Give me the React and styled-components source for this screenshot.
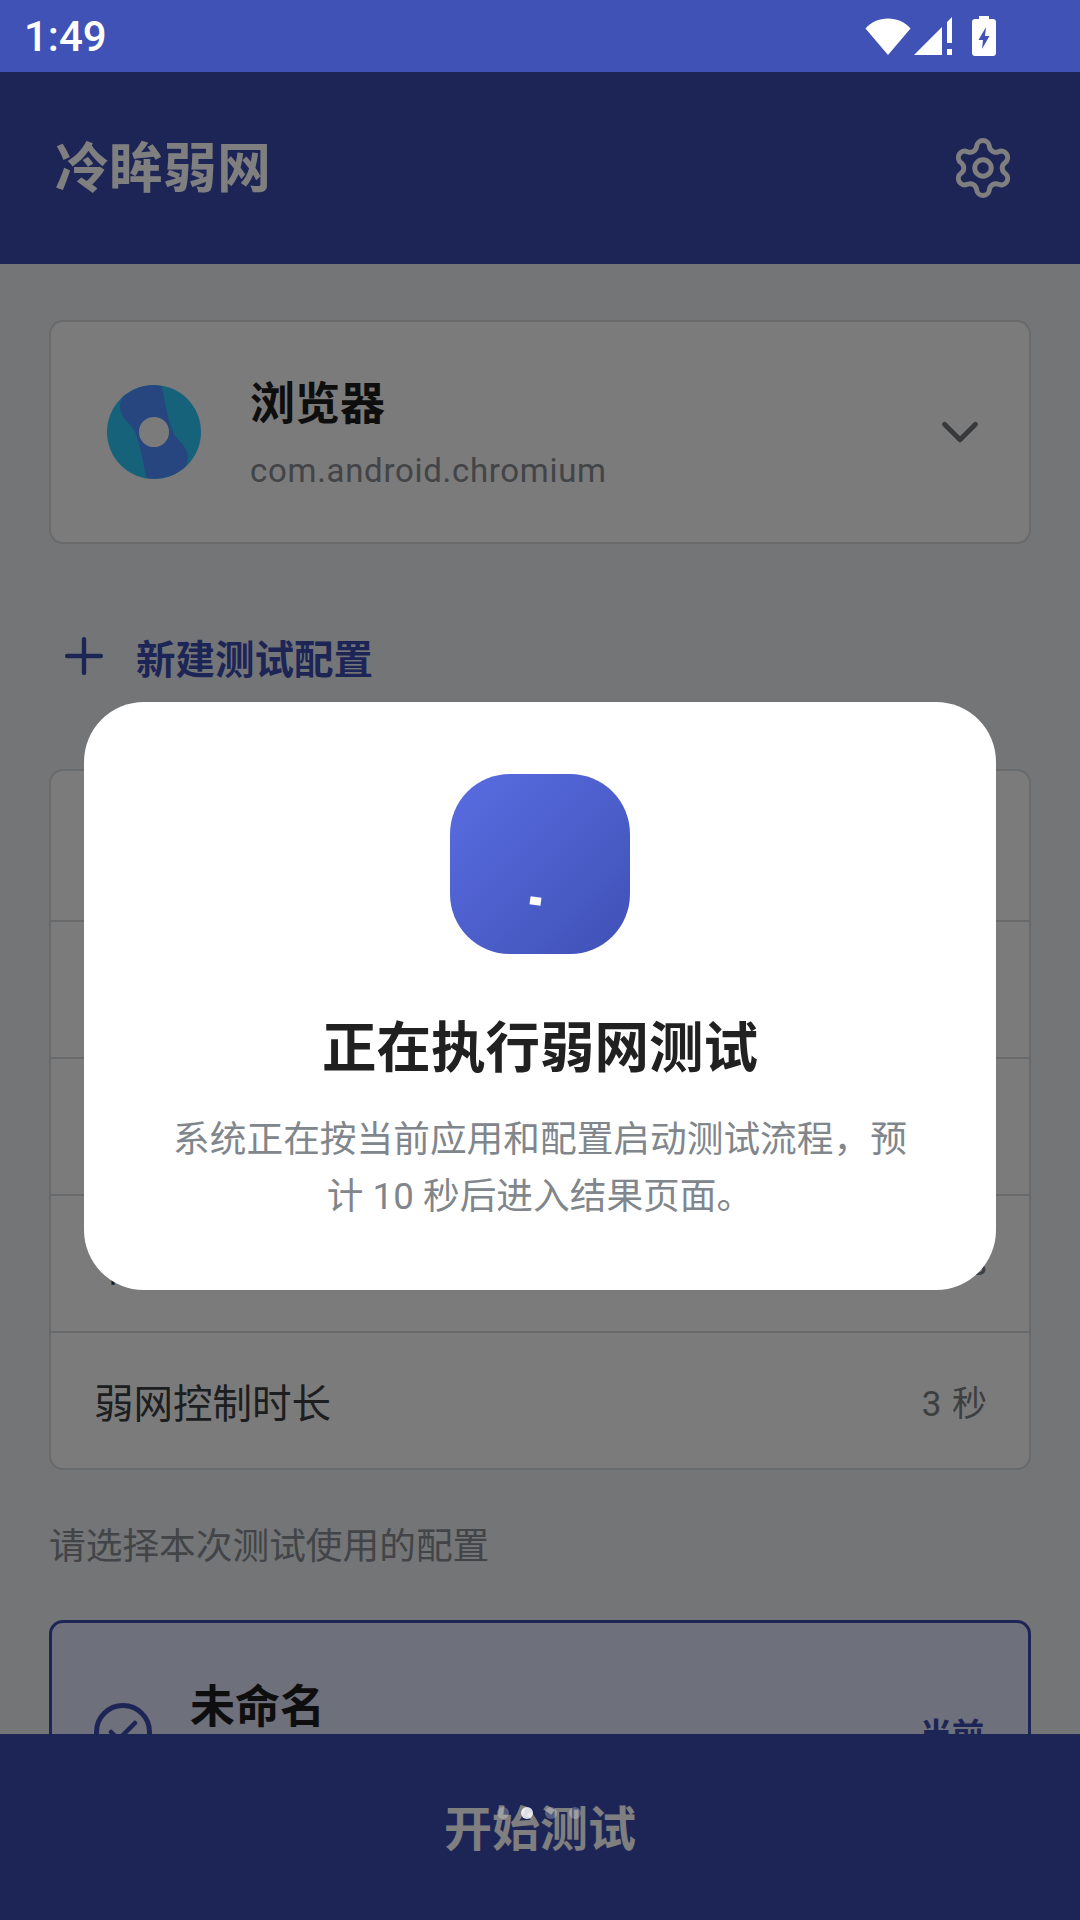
import React from "react";
import styled, { createGlobalStyle } from "styled-components";
import { Settings, ChevronDown, Plus, Check } from "lucide-react";

const GlobalStyle = createGlobalStyle`
  html, body {
    margin: 0;
    padding: 0;
  }
  body {
    font-family: Roboto, "Noto Sans CJK SC", sans-serif;
  }
  * {
    box-sizing: border-box;
  }
`;

const Phone = styled.div`
  position: relative;
  width: 1080px;
  height: 1920px;
  display: flex;
  flex-direction: column;
  overflow: hidden;
  background-color: #e7ebee;
`;

const StatusBar = styled.div`
  height: 72px;
  flex-shrink: 0;
  display: flex;
  align-items: center;
  justify-content: space-between;
  padding: 0 84px 0 24px;
  background-color: #4052b5;
  color: #ffffff;
  position: relative;
  z-index: 2;
`;

const Clock = styled.span`
  font-size: 42px;
  font-weight: 500;
`;

const StatusIcons = styled.div`
  display: flex;
  align-items: center;
`;

const AppBar = styled.div`
  height: 192px;
  flex-shrink: 0;
  display: flex;
  align-items: center;
  justify-content: space-between;
  padding: 0 64px 0 55px;
  background-color: #3a4aae;
  color: #ffffff;
`;

const AppTitle = styled.h1`
  margin: -7px 0 0;
  font-size: 54px;
  font-weight: 700;
`;

const Content = styled.div`
  flex: 1;
  min-height: 0;
  overflow: hidden;
  padding: 56px 49px 0;
`;

const Card = styled.div`
  border: 2px solid #d0d4d7;
  border-radius: 14px;
  background-color: #f6f6f6;
`;

const AppCard = styled(Card)`
  height: 224px;
  display: flex;
  align-items: center;
  padding: 0 38px 0 56px;
`;

const AppLogo = styled.svg`
  width: 94px;
  height: 94px;
  flex-shrink: 0;
`;

const AppText = styled.div`
  flex: 1;
  margin-left: 49px;
  padding-top: 4px;
  display: flex;
  flex-direction: column;
`;

const AppName = styled.span`
  font-size: 45px;
  line-height: 60px;
  font-weight: 700;
  color: #1c1c1e;
`;

const PackageName = styled.span`
  margin-top: 14px;
  font-size: 33px;
  line-height: 44px;
  letter-spacing: 0.7px;
  color: #85898e;
`;

const AddRow = styled.div`
  height: 72px;
  margin-top: 76px;
  display: flex;
  align-items: center;
  gap: 23px;
  padding-left: 6px;
  color: #3a4aae;
`;

const AddLabel = styled.span`
  font-size: 39.5px;
  font-weight: 700;
`;

const ParamList = styled(Card)`
  margin-top: 77px;
  height: 701px;
  display: flex;
  flex-direction: column;
`;

const ParamRow = styled.div`
  flex: ${({ $first }) => ($first ? "1" : "0 0 137px")};
  display: flex;
  align-items: center;
  justify-content: space-between;
  padding: 0 41px 0 43px;
  border-top: ${({ $first }) => ($first ? "none" : "2px solid #d0d4d7")};
`;

const ParamLabel = styled.span`
  font-size: 39.5px;
  color: #3a3c40;
`;

const ParamValue = styled.span`
  font-size: 35px;
  letter-spacing: 1px;
  color: #7a7e83;
`;

const SectionHint = styled.div`
  margin-top: 52px;
  font-size: 36.7px;
  line-height: 50px;
  color: #85898e;
`;

const ConfigCard = styled.div`
  height: 224px;
  margin-top: 48px;
  display: flex;
  align-items: center;
  padding: 0 44px 0 42px;
  border: 3px solid #3a4aae;
  border-radius: 14px;
  background-color: #dde0f6;
`;

const CheckCircle = styled.div`
  width: 58px;
  height: 58px;
  flex-shrink: 0;
  display: flex;
  align-items: center;
  justify-content: center;
  border: 5px solid #3a4aae;
  border-radius: 50%;
  color: #3a4aae;
`;

const ConfigName = styled.div`
  flex: 1;
  margin: -58px 0 0 38px;
  font-size: 45px;
  font-weight: 700;
  color: #1c1c1e;
`;

const CurrentTag = styled.span`
  font-size: 32px;
  font-weight: 700;
  color: #3a4aae;
`;

const StartBar = styled.div`
  height: 186px;
  flex-shrink: 0;
  display: flex;
  align-items: center;
  justify-content: center;
  padding-bottom: 4px;
  background-color: #3a4aae;
  color: #ffffff;
  font-size: 48px;
  font-weight: 700;
  position: relative;
`;

const Scrim = styled.div`
  position: absolute;
  top: 72px;
  left: 0;
  right: 0;
  bottom: 0;
  display: flex;
  align-items: center;
  justify-content: center;
  background-color: rgba(0, 0, 0, 0.5);
`;

const Dialog = styled.div`
  width: 912px;
  height: 588px;
  display: flex;
  flex-direction: column;
  align-items: center;
  padding: 72px 84px 0;
  border-radius: 60px;
  background-color: #ffffff;
`;

const Spinner = styled.div`
  width: 180px;
  height: 180px;
  display: flex;
  justify-content: center;
  padding-top: 123px;
  border-radius: 60px;
  background: linear-gradient(135deg, #5a6de2, #3f51b5);
`;

const SpinnerTick = styled.div`
  width: 11px;
  height: 8px;
  margin-left: -9px;
  background-color: #ffffff;
  transform: rotate(8deg);
`;

const DialogTitle = styled.h2`
  margin: 56px 0 0;
  font-size: 54.5px;
  line-height: 76px;
  font-weight: 700;
  color: #212121;
`;

const DialogBody = styled.p`
  margin: 25px 0 0;
  font-size: 36.7px;
  line-height: 57px;
  text-align: center;
  color: #80868b;
`;

const PageDots = styled.div`
  position: absolute;
  left: 497px;
  top: 1807px;
  display: flex;
  gap: 12px;
`;

const PageDot = styled.span`
  width: 12px;
  height: 12px;
  border-radius: 50%;
  background-color: ${({ $active }) =>
    $active ? "rgba(255,255,255,0.85)" : "rgba(255,255,255,0.25)"};
`;

const params = [
  { id: 1 },
  { id: 2 },
  { id: 3 },
  { id: 4, label: "下行延迟", value: "300 ms" },
  { id: 5, label: "弱网控制时长", value: "3 秒" },
];

const WifiIcon = () => (
  <svg width="46" height="38" viewBox="0 0 46 38" style={{ marginTop: 1 }}>
    <path d="M23 37 L0.5 10.5 C6 4 14 0.5 23 0.5 C32 0.5 40 4 45.5 10.5 Z" fill="#fff" />
  </svg>
);

const SignalIcon = () => (
  <svg width="38" height="38" viewBox="0 0 38 38" style={{ marginLeft: 3 }}>
    <path d="M0 38 L28 10 L28 38 Z" fill="#fff" />
    <path d="M33 5 L38 0 L38 26 L33 26 Z M33 32 H38 V38 H33 Z" fill="#fff" />
  </svg>
);

const BatteryIcon = () => (
  <svg width="24" height="40" viewBox="0 0 24 40" style={{ marginLeft: 20 }}>
    <path
      d="M7 0 H17 V3 H21 C22.7 3 24 4.3 24 6 V37 C24 38.7 22.7 40 21 40 H3 C1.3 40 0 38.7 0 37 V6 C0 4.3 1.3 3 3 3 H7 Z"
      fill="#fff"
    />
    <path d="M14 11 L6.5 24 H11 L10 33 L17.5 20 H13 Z" fill="#4052b5" />
  </svg>
);

const App = () => {
  return (
    <Phone>
      <GlobalStyle />
      <StatusBar>
        <Clock>1:49</Clock>
        <StatusIcons>
          <WifiIcon />
          <SignalIcon />
          <BatteryIcon />
        </StatusIcons>
      </StatusBar>
      <AppBar>
        <AppTitle>冷眸弱网</AppTitle>
        <Settings size={66} strokeWidth={1.8} />
      </AppBar>
      <Content>
        <AppCard>
          <AppLogo viewBox="0 0 100 100">
            <circle cx="50" cy="50" r="50" fill="#2cc4f4" />
            <path
              d="M58 1 C62 18 64 34 70 50 C75 60 88 66 86 80 C85 85 83 88 80 90 A50 50 0 0 1 42 99 C38 82 36 66 30 50 C25 40 12 34 14 20 C15 15 17 12 20 10 A50 50 0 0 1 58 1 Z"
              fill="#4f8cff"
            />
            <circle cx="50" cy="50" r="16" fill="#f6f6f6" />
          </AppLogo>
          <AppText>
            <AppName>浏览器</AppName>
            <PackageName>com.android.chromium</PackageName>
          </AppText>
          <ChevronDown size={62} strokeWidth={1.9} color="#6f7377" />
        </AppCard>
        <AddRow>
          <Plus size={58} strokeWidth={1.8} />
          <AddLabel>新建测试配置</AddLabel>
        </AddRow>
        <ParamList>
          {params.map((row, i) => (
            <ParamRow key={row.id} $first={i === 0}>
              <ParamLabel>{row.label}</ParamLabel>
              <ParamValue>{row.value}</ParamValue>
            </ParamRow>
          ))}
        </ParamList>
        <SectionHint>请选择本次测试使用的配置</SectionHint>
        <ConfigCard>
          <CheckCircle>
            <Check size={36} strokeWidth={3} />
          </CheckCircle>
          <ConfigName>未命名</ConfigName>
          <CurrentTag>当前</CurrentTag>
        </ConfigCard>
      </Content>
      <StartBar>开始测试</StartBar>
      <Scrim>
        <Dialog>
          <Spinner>
            <SpinnerTick />
          </Spinner>
          <DialogTitle>正在执行弱网测试</DialogTitle>
          <DialogBody>
            系统正在按当前应用和配置启动测试流程，预计 10 秒后进入结果页面。
          </DialogBody>
        </Dialog>
      </Scrim>
      <PageDots>
        <PageDot />
        <PageDot $active />
        <PageDot />
        <PageDot />
      </PageDots>
    </Phone>
  );
};

export default App;
